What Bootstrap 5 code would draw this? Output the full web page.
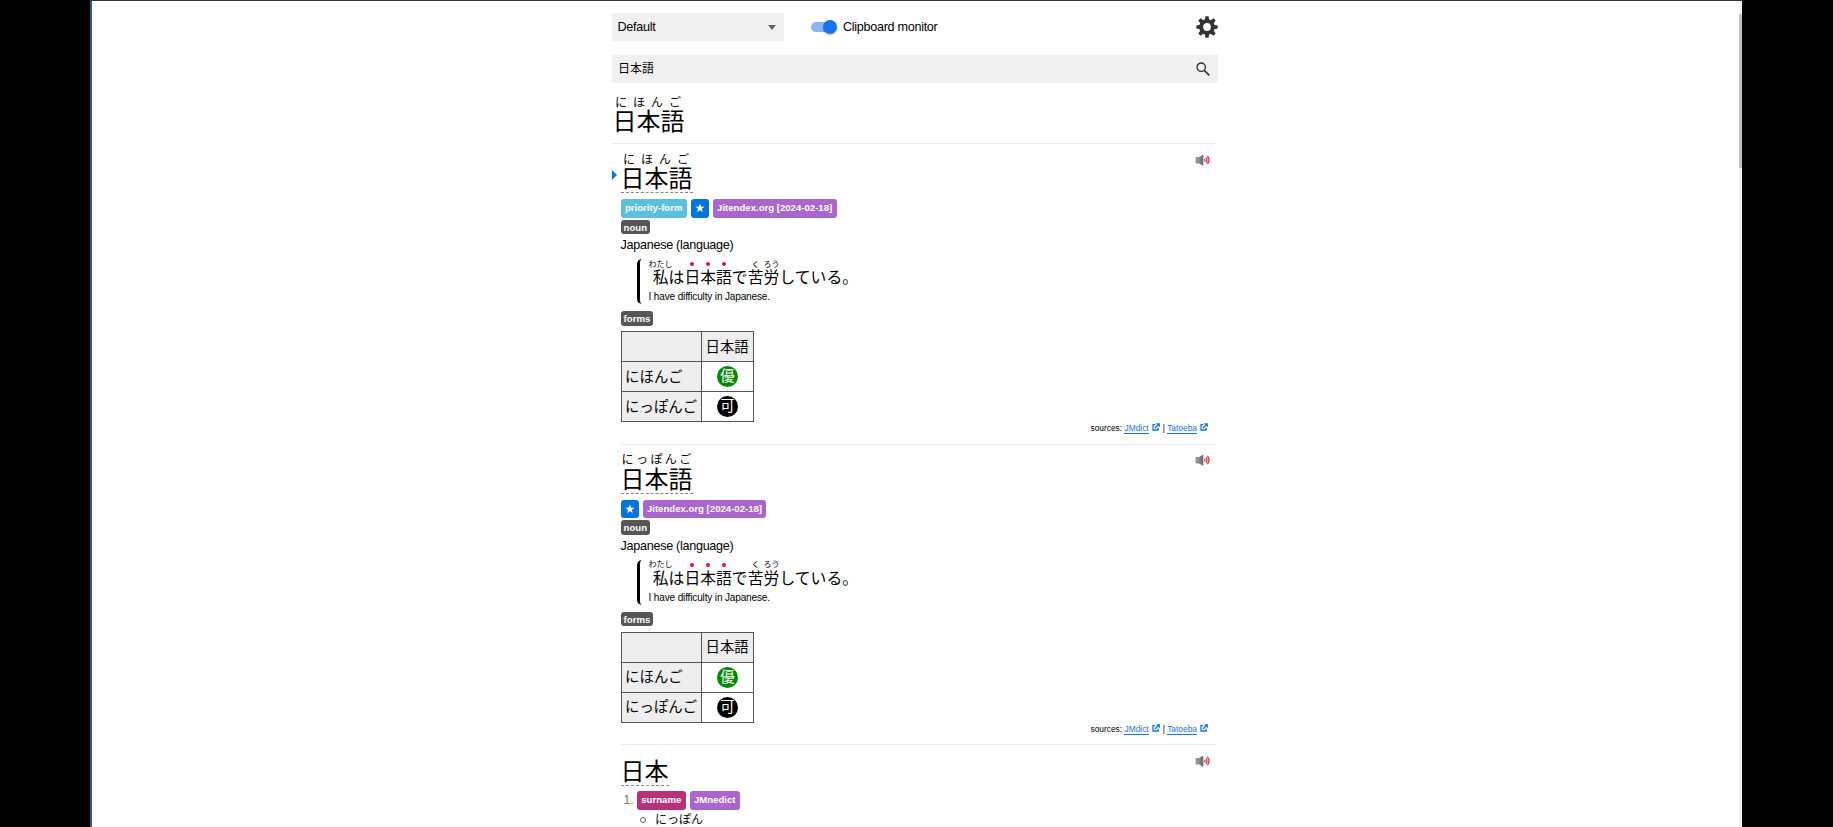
<!DOCTYPE html>
<html lang="ja">
<head>
<meta charset="utf-8">
<title>日本語 - Search</title>
<link href="https://cdn.jsdelivr.net/npm/bootstrap@5.3.0/dist/css/bootstrap.min.css" rel="stylesheet">
<style>
body{background:#000;height:827px;overflow:hidden;font:12px/18px "Liberation Sans","Noto Sans CJK JP",sans-serif;color:#000}
.window{margin-left:90px;width:1652px;height:827px;background:#fff;border-left:2px solid #34597c;border-top:1px solid #333036;overflow:hidden}
.track{width:3px;background:#f1f1f1;padding-top:13px}
.thumb{height:154px;background:#c1c1c1}
.page-col{width:606px;margin-left:520px}
.latin{font-size:12.6px;letter-spacing:-.29px}
.profile{width:172px;height:28px;background:#f0f0f0;padding:0 8px 0 5.5px;margin-right:27px;border-radius:1px}
.caret{border:4.5px solid transparent;border-top:5px solid #666;border-bottom:0}
.toggle{width:26px;height:14px;margin-right:6px}
.toggle i{display:block;width:24px;height:10px;border-radius:5px;background:#8db4f3}
.toggle b{top:0;right:0;width:14px;height:14px;border-radius:50%;background:#1a73e8;box-shadow:0 1px 2px #0004}
.searchbar{height:28px;background:#f0f0f0;margin-top:14px;padding:0 8px 0 6px}
.query{height:60px;padding:12.5px 0 0 .5px}
.word{font-size:24px;line-height:28px;display:inline-block}
.kana{font-size:12px;line-height:14px;height:12.5px;white-space:nowrap}
.wide{letter-spacing:6px;padding-left:2.5px}
.tight{letter-spacing:2.4px;padding-left:1px}
.entry{height:300.5px;padding-left:8.6px;margin-right:3px}
.entry::before{content:"";display:block;height:1px;background:#eaeaea}
.entry.first::before{margin-left:-8.6px}
.head{height:55px;padding-top:8.8px}
.dash{border-bottom:1px dashed #888;height:28px}
.arrow{left:-9px;top:26px;border:5.5px solid transparent;border-left:5px solid #1a6fd8;border-right:0}
.sound{margin:0 4.5px 0 0;width:17px;height:14px}
.tag{font-weight:700;font-size:9.6px;line-height:18.5px;height:18.5px;border-radius:3px;padding:0 4.3px;color:#fff;white-space:nowrap}
.tag-sm{height:14.5px;line-height:15px;padding:0 3px;background:#565656;width:max-content}
.bg-pri{background:#5bc0de}.bg-star{background:#0275d8}.bg-dic{background:#aa66cc}.bg-name{background:#b6327a}
.bg-star{width:18px}
.gloss{height:18px;line-height:18px;margin-top:2px}
.example{height:45px;margin:5px 0 7px 16px;border-left:3px solid #000;border-radius:5px;padding-left:9px}
.sentence{font-size:15.8px;line-height:18px;height:29px;padding-top:.7px}
.sentence small{font-size:8px;line-height:9px;height:9.5px;white-space:nowrap}
.sentence em{height:9.5px;display:flex;align-items:center}
.sentence em::before{content:"";width:4px;height:4px;border-radius:50%;background:#d3134a}
.sentence .align-self-end{padding-bottom:1px}
.eng{font-size:10px;letter-spacing:-.14px;line-height:18px}
.forms{border-collapse:collapse;font-size:14.4px;line-height:20px;margin-top:5.5px;width:133px}
.forms th,.forms td{border:1px solid #555;height:30px;padding:0 3.5px;font-weight:400;white-space:nowrap}
.forms th{background:#eee}
.disc{width:21px;height:21px;line-height:21px;border-radius:50%;color:#fff;background:#000;margin:auto;text-align:center}
.good{background:#080}
.sources{font-size:8.4px;line-height:12px;margin-right:7px;height:12px}
.sources a{color:#1a73e8;text-decoration:none;border-bottom:1px solid #1a73e8;height:12px}
.sources svg{margin:1px 0 0 3px}
.sources .mid{margin-right:3px}
.marker{color:#777;width:16.4px;padding-left:3px;font-size:12px}
.bullet{width:4px;height:4px;border:1px solid #666;border-radius:50%;margin:1px 9px 0 19.4px;box-sizing:content-box}
</style>
<script src="https://cdn.jsdelivr.net/npm/bootstrap@5.3.0/dist/js/bootstrap.bundle.min.js"></script>
</head>
<body>
<svg width="0" height="0" class="position-absolute"><defs>
<linearGradient id="metal"><stop stop-color="#aaa"/><stop offset="1" stop-color="#666"/></linearGradient>
<symbol id="speaker" viewBox="0 0 17 14"><path d="M2 4.500h3L9 2v10.500L5 10H2z" fill="url(#metal)" stroke="#777" stroke-width=".7"/><path d="M10.500 5.800q1 1.300 0 2.700M12 4.400q2 2.800 0 5.400M13.400 3q3.200 4 0 8.200" fill="none" stroke="#df3347" stroke-width="1.300"/></symbol>
<symbol id="ext" viewBox="0 0 8 8"><path d="M3.300 1.600H1v5.400h5.200V4.800M3 5l3.800-3.800M4.400.8h2.900v2.900" fill="none" stroke="#1a73e8" stroke-width="1.300"/></symbol>
</defs></svg>
<div class="window d-flex">
<main class="page-col">
  <header class="d-flex align-items-center" style="padding-top:12px">
    <div class="profile d-flex align-items-center justify-content-between"><span class="latin">Default</span><span class="caret"></span></div>
    <div class="toggle position-relative d-flex align-items-center"><i></i><b class="position-absolute"></b></div>
    <span class="latin">Clipboard monitor</span>
    <svg class="ms-auto" width="22" height="22" viewBox="-11 -11 22 22"><g fill="#333"><circle r="7.800"/><path id="tooth" d="M-2.200-6.500l.6-4.200h3.200l.6 4.200v13l-.6 4.200h-3.200l-.6-4.200z"/><use href="#tooth" transform="rotate(45)"/><use href="#tooth" transform="rotate(90)"/><use href="#tooth" transform="rotate(135)"/></g><circle r="3.900" fill="#fff"/></svg>
  </header>
  <div class="searchbar d-flex align-items-center justify-content-between"><span>日本語</span><svg width="14" height="14" viewBox="0 0 14 14" fill="none" stroke="#333" stroke-width="1.300"><circle cx="5.200" cy="5.200" r="4.200"/><path d="M8.300 8.300l5 5" stroke-width="1.700"/></svg></div>
  <section class="query"><div class="kana wide">にほんご</div><div class="word">日本語</div></section>

  <article class="entry first">
    <div class="head d-flex justify-content-between position-relative"><span class="arrow position-absolute"></span><div><div class="kana wide">にほんご</div><div class="word dash">日本語</div></div><svg class="sound"><use href="#speaker"/></svg></div>
    <div class="d-flex gap-1"><span class="tag bg-pri">priority-form</span><span class="tag bg-star">★</span><span class="tag bg-dic">Jitendex.org [2024-02-18]</span></div>
    <div class="tag tag-sm" style="margin-top:2px">noun</div>
    <div class="gloss"><span class="latin">Japanese (language)</span></div>
    <div class="example"><div class="sentence d-flex"><span class="d-flex flex-column align-items-center"><small>わたし</small><span>私</span></span><span class="align-self-end" style="margin-left:-4px">は</span><span class="d-flex flex-column align-items-center"><em></em>日</span><span class="d-flex flex-column align-items-center"><em></em>本</span><span class="d-flex flex-column align-items-center"><em></em>語</span><span class="align-self-end">で</span><span class="d-flex flex-column align-items-center"><small>く</small>苦</span><span class="d-flex flex-column align-items-center"><small>ろう</small>労</span><span class="align-self-end">している。</span></div><div class="eng">I have difficulty in Japanese.</div></div>
    <div class="tag tag-sm">forms</div>
    <table class="forms"><tr><th></th><th>日本語</th></tr><tr><th>にほんご</th><td><div class="disc good">優</div></td></tr><tr><th>にっぽんご</th><td><div class="disc">可</div></td></tr></table>
    <div class="sources d-flex justify-content-end">sources:&nbsp;<a href="#">JMdict</a><svg width="8" height="8" class="mid"><use href="#ext"/></svg>|&nbsp;<a href="#">Tatoeba</a><svg width="8" height="8"><use href="#ext"/></svg></div>
  </article>

  <article class="entry">
    <div class="head d-flex justify-content-between"><div><div class="kana tight">にっぽんご</div><div class="word dash">日本語</div></div><svg class="sound"><use href="#speaker"/></svg></div>
    <div class="d-flex gap-1"><span class="tag bg-star">★</span><span class="tag bg-dic">Jitendex.org [2024-02-18]</span></div>
    <div class="tag tag-sm" style="margin-top:2px">noun</div>
    <div class="gloss"><span class="latin">Japanese (language)</span></div>
    <div class="example"><div class="sentence d-flex"><span class="d-flex flex-column align-items-center"><small>わたし</small><span>私</span></span><span class="align-self-end" style="margin-left:-4px">は</span><span class="d-flex flex-column align-items-center"><em></em>日</span><span class="d-flex flex-column align-items-center"><em></em>本</span><span class="d-flex flex-column align-items-center"><em></em>語</span><span class="align-self-end">で</span><span class="d-flex flex-column align-items-center"><small>く</small>苦</span><span class="d-flex flex-column align-items-center"><small>ろう</small>労</span><span class="align-self-end">している。</span></div><div class="eng">I have difficulty in Japanese.</div></div>
    <div class="tag tag-sm">forms</div>
    <table class="forms"><tr><th></th><th>日本語</th></tr><tr><th>にほんご</th><td><div class="disc good">優</div></td></tr><tr><th>にっぽんご</th><td><div class="disc">可</div></td></tr></table>
    <div class="sources d-flex justify-content-end">sources:&nbsp;<a href="#">JMdict</a><svg width="8" height="8" class="mid"><use href="#ext"/></svg>|&nbsp;<a href="#">Tatoeba</a><svg width="8" height="8"><use href="#ext"/></svg></div>
  </article>

  <article class="entry">
    <div class="d-flex justify-content-between" style="padding-top:9px;height:46px"><div class="word dash" style="margin-top:4px">日本</div><svg class="sound"><use href="#speaker"/></svg></div>
    <div class="d-flex"><span class="marker">1.</span><span class="tag bg-name me-1">surname</span><span class="tag bg-dic">JMnedict</span></div>
    <div class="d-flex align-items-center" style="padding-top:1px"><span class="bullet"></span><span>にっぽん</span></div>
  </article>
</main>
<div class="track ms-auto"><div class="thumb"></div></div>
</div>
</body>
</html>
